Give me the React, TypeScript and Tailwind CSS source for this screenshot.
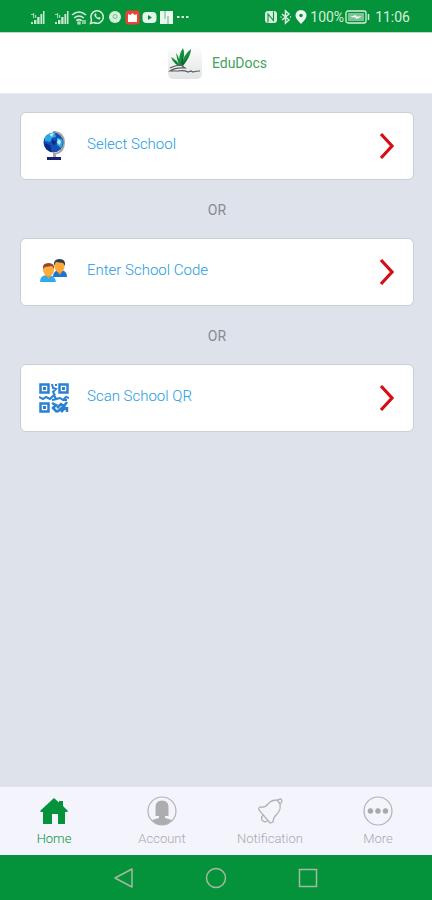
import type { ReactNode } from "react";

function SignalIcon() {
  return (
    <svg viewBox="0 0 15 15" className="h-[15px] w-[15px]" fill="#c5e8cf" aria-hidden="true">
      <path d="M1 12h2v2H1zM4 10h2.400v4H4zM7.200 7h2.400v7H7.200zM10.400 4h1.900v10h-1.900zM13 1h1.500v13H13z" />
      <path d="M1 4h2v1H1zM3 3h1.200v5H3zM5 5h1.200v3H5z" opacity=".8" />
    </svg>
  );
}

function StatusBar() {
  return (
    <div className="flex h-[33px] items-center justify-between border-b border-[#b5dfc1] bg-[#04933a] pt-[2px] pr-[22px] pl-[30px] text-[#d5efdc]">
      <div className="flex items-center gap-[2px]">
        <span className="mr-[7px]">
          <SignalIcon />
        </span>
        <SignalIcon />
        <svg viewBox="0 0 16 16" className="h-4 w-4" fill="none" stroke="currentColor" strokeWidth="1.6" aria-hidden="true">
          <path d="M1 6q7-6 14 0M3.2 9q4.800-4 9.600 0M5.300 11.600q2.700-2 5.400 0" />
          <path d="M7 13h2v2H7zM12 11v4M14 11v4" strokeWidth="1.200" />
        </svg>
        <svg viewBox="0 0 16 16" className="h-4 w-4" fill="none" stroke="currentColor" strokeWidth="1.500" aria-hidden="true">
          <path d="M1.500 14.500l1-3.600A6.300 6.300 0 1 1 5 13.500z" />
          <path d="M5.400 5q-.8 2 1.600 4t4 1.200l.6-1.400-1.600-.9-.9.8Q7.700 8 7 6.700l.6-.8L7 4.300z" fill="currentColor" stroke="none" />
        </svg>
        <svg viewBox="0 0 16 16" className="h-4 w-4" aria-hidden="true">
          <circle cx="8" cy="8" r="6" fill="currentColor" />
          <circle cx="8" cy="7.500" r="2" fill="none" stroke="#6fc08a" />
        </svg>
        <svg viewBox="0 0 15 15" className="h-[15px] w-[15px]" aria-hidden="true">
          <rect x=".5" y=".5" width="14" height="14" rx="3" fill="#ef3f38" />
          <path d="M3 4l2.500 1L7.500 3l2 2L12 4v8H3z" fill="#fff" />
        </svg>
        <svg viewBox="0 0 15 15" className="h-[15px] w-[15px]" aria-hidden="true">
          <rect x=".5" y="2" width="14" height="11" rx="4" fill="#e4f5e9" />
          <path d="M6 5l4 2.500-4 2.500z" fill="#04933a" />
        </svg>
        <svg viewBox="0 0 15 15" className="h-[15px] w-[15px]" aria-hidden="true">
          <rect x="1" y="1" width="13" height="13" fill="#eaf7ee" />
          <path d="M6 1v8M9 6v8" stroke="#5bb87b" />
        </svg>
        <svg viewBox="0 0 14 14" className="h-[14px] w-[14px]" fill="currentColor" aria-hidden="true">
          <path d="M1 6h2.500v2H1zM5.500 6H8v2H5.500zM10 6h2.500v2H10z" />
        </svg>
      </div>
      <div className="flex items-center gap-px">
        <svg viewBox="0 0 14 14" className="h-[14px] w-[14px]" fill="none" aria-hidden="true">
          <rect x="1" y="1" width="12" height="12" rx="3" fill="#d5efdc" />
          <path d="M4 12.500V4l5.500 6.500V1.500" stroke="#04933a" strokeWidth="1.100" />
        </svg>
        <svg viewBox="0 0 14 16" className="h-4 w-[14px]" fill="none" stroke="currentColor" strokeWidth="1.500" aria-hidden="true">
          <path d="M3 5l7 6-3.500 3V2L10 5l-7 6M1.500 8h1M11 8h1" />
        </svg>
        <svg viewBox="0 0 14 16" className="h-4 w-[14px]" aria-hidden="true">
          <path d="M7 15Q1.500 9.500 1.500 6.500a5.500 5.500 0 0 1 11 0Q12.500 9.500 7 15z" fill="#eefaf1" />
          <circle cx="7" cy="6.500" r="1.800" fill="#04933a" />
        </svg>
        <span className="ml-px text-sm">100%</span>
        <svg viewBox="0 0 25 14" className="h-[14px] w-[25px]" fill="none" stroke="currentColor" aria-hidden="true">
          <rect x="1" y="1" width="20" height="12" rx="2" strokeWidth="1.300" />
          <rect x="3" y="3" width="16" height="8" fill="#7cc394" stroke="none" />
          <path d="M5 7l6-2v1.500h6L11 9V7.500z" fill="#fff" stroke="none" />
          <path d="M23.500 4v6" strokeWidth="1.500" />
        </svg>
        <span className="ml-1 text-sm">11:06</span>
      </div>
    </div>
  );
}

function Logo() {
  return (
    <svg viewBox="0 0 36 34" className="h-[34px] w-9" aria-hidden="true">
      <defs>
        <linearGradient id="plate" x1="0" y1="0" x2="0" y2="1">
          <stop offset="0" stopColor="#fdfdfd" />
          <stop offset="1" stopColor="#e2e3e3" />
        </linearGradient>
      </defs>
      <rect x="1" y="1" width="34" height="32" rx="5" fill="url(#plate)" />
      <g fill="#15913d">
        <path d="M12 20Q11 9 16 2q3 7-2 18z" />
        <path d="M14 20Q16 9 24 3q0 7-8 17z" />
        <path d="M12 20Q10 13 9 7q4 5 4 13z" />
        <path d="M12 20Q6 17 4 11q6 3 9 9z" />
      </g>
      <path d="M14 19L16 8v9zM11 19L6 13l3 5zM14 20l8-11-5 9z" fill="#14532f" />
      <path d="M3 22q6-3 11-3l4 3q-9-1-15 3h8q6-1 10 1l3-1 2 1q3-1 7-1" fill="none" stroke="#555b5b" strokeWidth="1.200" />
    </svg>
  );
}

function GlobeIcon() {
  return (
    <svg viewBox="0 0 30 32" className="h-8 w-[30px]" aria-hidden="true">
      <path d="M16 2q9 1 9 10.500T16 24" fill="none" stroke="#aaa69e" strokeWidth="2" />
      <path d="M14 1h3v3h-3zM14 23h3v5h-3z" fill="#a9a39b" />
      <circle cx="14.500" cy="12.500" r="10" fill="#174fb4" />
      <path d="M6 7q5-5 10-4l1 4-4 1-2 4-5-1zM18 8l5 1q2 4-1 9l-4-3z" fill="#28a9e0" />
      <path d="M10 4l5-1-2 4zM19 9l3 2-1 4-3-2z" fill="#b9eaf7" />
      <path d="M5 13l6 2 2 7q-7-1-8-9zM13 10l4 1-1 4-3-1z" fill="#0b2c8c" />
      <path d="M8 27h14v3H8z" fill="#16216f" />
    </svg>
  );
}

function PeopleIcon() {
  return (
    <svg viewBox="0 0 30 30" className="h-[30px] w-[30px]" aria-hidden="true">
      <path d="M14 20q0-7 7-7t7 7z" fill="#1976d2" />
      <path d="M17 13l4 5 3-5z" fill="#ee962c" />
      <ellipse cx="20.500" cy="9.500" rx="5" ry="6" fill="#ffa936" />
      <path d="M15 9q-1-7 5.500-7T26 9l-2-3-7-1z" fill="#343c4a" />
      <path d="M1 25q0-7 7.500-7T17 25z" fill="#2daaf0" />
      <path d="M6 17l3.500 5 3.500-5z" fill="#ee962c" />
      <ellipse cx="9.500" cy="13" rx="5.500" ry="6" fill="#ffac3b" />
      <path d="M4 12q-1-6 5.500-6T15 12l-2-3-7 1z" fill="#94482f" />
    </svg>
  );
}

function QrIcon() {
  return (
    <svg viewBox="0 0 30 30" className="h-[30px] w-[30px]" fill="none" stroke="#2b80d2" strokeWidth="2" aria-hidden="true">
      <path d="M1.500 1.500h8v8h-8zM20.500 1.500h8v8h-8zM1.500 20.500h8v8h-8z" strokeWidth="2.500" />
      <path d="M4 4h3v3H4zM23 4h3v3h-3zM4 23h3v3H4z" fill="#2b80d2" stroke="none" />
      <path d="M13 1l1 4 3 1-3 3 2 3M17 1v2M0 14l4 2 3-2 4 2 4-4 2 4 4-1 3 2 3-3 3 1M13 17l5-1M24 17h4" />
      <path d="M13 20l4 2-3 3 4 4M18 25l4-4 3 2 3-4M18 29l7-6M22 29l5-5M28 24v5" strokeWidth="2.500" />
    </svg>
  );
}

function OptionCard({ icon, label }: { icon: ReactNode; label: string }) {
  return (
    <button type="button" className="flex h-[68px] w-full items-center rounded-md border border-[#c8d0d2] bg-white pr-[18px] pl-[18px] text-left">
      <span className="flex w-[30px] justify-center">{icon}</span>
      <span className="ml-[18px] flex-1 pb-1 text-[15px] leading-5 font-light text-[#1d9be4]">{label}</span>
      <svg viewBox="0 0 16 28" className="h-7 w-4" fill="none" stroke="#d40e14" strokeWidth="3.200" aria-hidden="true">
        <path d="M2 2l11 12L2 26" />
      </svg>
    </button>
  );
}

function Or() {
  return <p className="flex h-[58px] items-center justify-center pt-[2px] text-sm text-[#858a92]">OR</p>;
}

function Tab({ icon, label, active = false }: { icon: ReactNode; label: string; active?: boolean }) {
  return (
    <button
      type="button"
      aria-current={active ? "page" : undefined}
      className={`flex flex-1 flex-col items-center gap-[3px] pt-[9px] text-[13px] leading-5 ${active ? "text-[#04933a]" : "text-[#a9a9af]"}`}
    >
      {icon}
      <span className="font-light">{label}</span>
    </button>
  );
}

export default function App() {
  return (
    <div className="flex min-h-screen flex-col bg-[#dee3eb] font-['Roboto','Noto_Sans',sans-serif]">
      <StatusBar />
      <header className="flex h-[61px] items-center justify-center gap-[9px] border-b border-[#e8ebf4] bg-white pl-[2px]">
        <Logo />
        <h1 className="text-sm text-[#3fa35c]">EduDocs</h1>
      </header>
      <main className="flex-1 pt-[18px] pr-[18px] pl-5">
        <OptionCard icon={<GlobeIcon />} label="Select School" />
        <Or />
        <OptionCard icon={<PeopleIcon />} label="Enter School Code" />
        <Or />
        <OptionCard icon={<QrIcon />} label="Scan School QR" />
      </main>
      <nav className="flex h-[68px] bg-[#f4f4fc]">
        <Tab
          active
          label="Home"
          icon={
            <svg viewBox="0 0 30 30" className="h-[30px] w-[30px]" fill="#04933a" aria-hidden="true">
              <path d="M15 2l5 4.500V5h4v5l5 5-1 1h-2v12h-7V18h-6v10H4V16H2l-1-1z" />
            </svg>
          }
        />
        <Tab
          label="Account"
          icon={
            <svg viewBox="0 0 30 30" className="h-[30px] w-[30px]" aria-hidden="true">
              <circle cx="15" cy="15" r="14" fill="none" stroke="#b2b1b8" strokeWidth="1.200" />
              <path d="M8.500 20V11q0-6.500 6.500-6.500t6.500 6.500v9H18v2l7 2q-4 5-10 5T5 24l7-2v-2z" fill="#adadaf" />
            </svg>
          }
        />
        <Tab
          label="Notification"
          icon={
            <svg viewBox="0 0 30 30" className="h-[30px] w-[30px]" fill="none" stroke="#b2b1b8" strokeWidth="1.300" aria-hidden="true">
              <path d="M5 11q5 1 8-3t9-4l4-1 1 2-2 4q1 5-3 9t-4 8l-3 1L4 14q-1-2 1-3zM8 19q-3 4 0 6t5-1" />
              <path d="M22 4l3 4" />
            </svg>
          }
        />
        <Tab
          label="More"
          icon={
            <svg viewBox="0 0 30 30" className="h-[30px] w-[30px]" aria-hidden="true">
              <circle cx="15" cy="15" r="14" fill="none" stroke="#b2b1b8" strokeWidth="1.200" />
              <path d="M7.500 12.200a2.800 2.800 0 1 1-.1 0zM15 12.200a2.800 2.800 0 1 1-.1 0zM22.500 12.200a2.800 2.800 0 1 1-.1 0z" fill="#a8a8ac" />
            </svg>
          }
        />
      </nav>
      <div className="flex h-[45px] items-center justify-center gap-[70px] bg-[#04933a]">
        <button type="button" aria-label="Back">
          <svg viewBox="0 0 22 22" className="h-[22px] w-[22px]" fill="none" stroke="#a7b8a2" strokeWidth="1.500" strokeLinejoin="round" aria-hidden="true">
            <path d="M2 11L19 2v18z" />
          </svg>
        </button>
        <button type="button" aria-label="Home screen">
          <svg viewBox="0 0 22 22" className="h-[22px] w-[22px]" fill="none" stroke="#a7b8a2" strokeWidth="1.500" aria-hidden="true">
            <circle cx="11" cy="11" r="9.500" />
          </svg>
        </button>
        <button type="button" aria-label="Recent apps">
          <svg viewBox="0 0 22 22" className="h-[22px] w-[22px]" fill="none" stroke="#a7b8a2" strokeWidth="1.500" aria-hidden="true">
            <path d="M2.500 2.500h17v17h-17z" />
          </svg>
        </button>
      </div>
    </div>
  );
}
